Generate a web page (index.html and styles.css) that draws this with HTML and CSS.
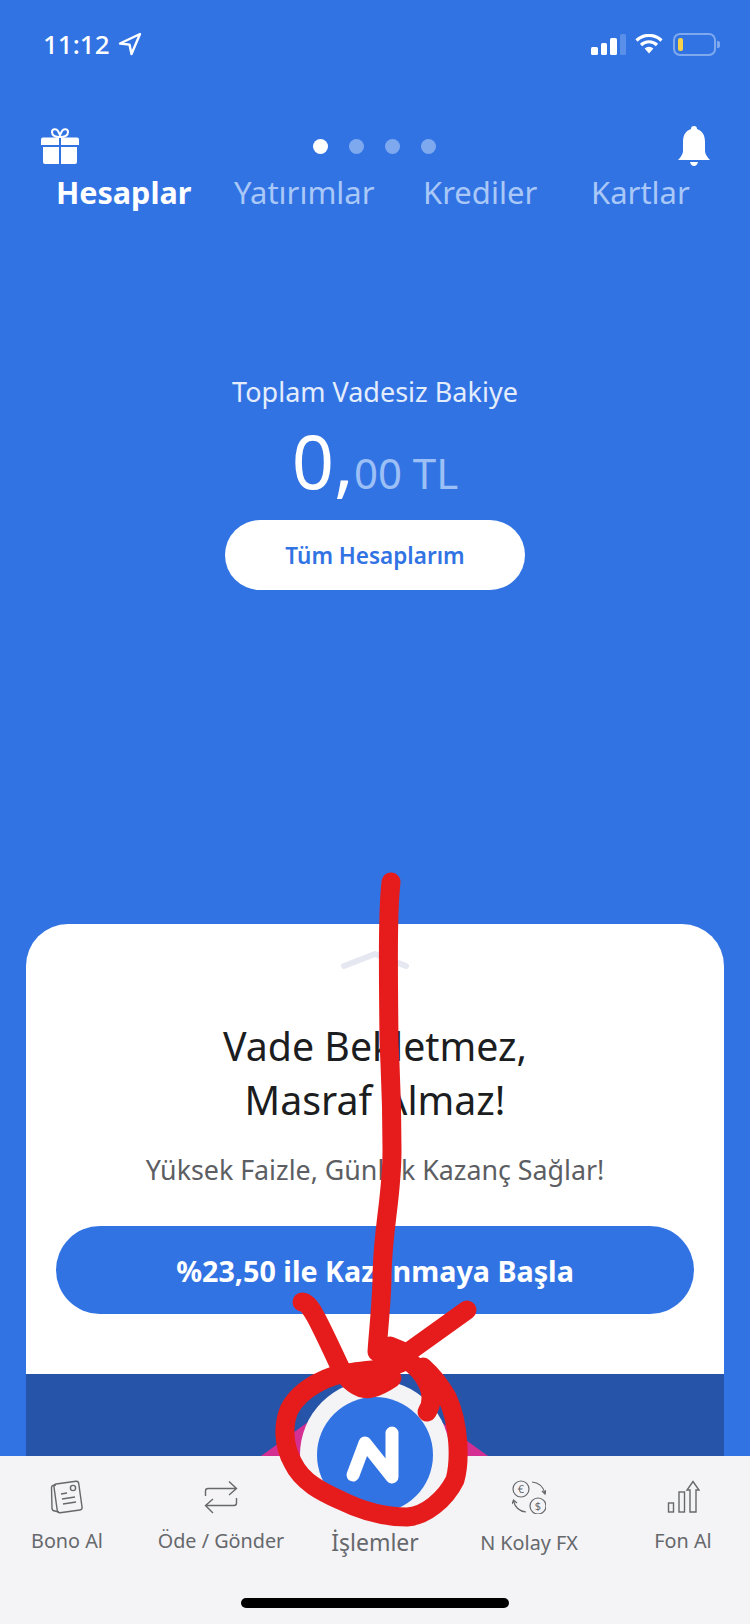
FILE: index.html
```html
<!DOCTYPE html>
<html lang="en">
<head>
    <meta charset="UTF-8">
    <meta name="viewport" content="width=device-width, initial-scale=1.0">
    <title>Hesaplar</title>
    <link rel="stylesheet" href="styles.css">
</head>
<body>
    <div class="screen">
        <div class="statusBar">
            <div class="clock">
                <span>11:12</span>
                <svg class="locationIcon" viewBox="0 0 24 24"><path d="M22 2 L2 11.5 L11.5 12.6 L13.5 22 Z" fill="none" stroke="#fff" stroke-width="2.4" stroke-linejoin="round"/></svg>
            </div>
            <div class="statusIcons">
                <div class="signal">
                    <span class="bar1"></span><span class="bar2"></span><span class="bar3"></span><span class="bar4"></span>
                </div>
                <svg class="wifiIcon" viewBox="0 0 28 20">
                    <path d="M1.5 6.5 A18 18 0 0 1 26.5 6.5 M6 11 A11.5 11.5 0 0 1 22 11" fill="none" stroke="#fff" stroke-width="3.2"/>
                    <path d="M9.6 14.4 A6.4 6.4 0 0 1 18.4 14.4 L14 19.5 Z" fill="#fff"/>
                </svg>
                <div class="battery"><span class="charge"></span></div>
            </div>
        </div>

        <div class="topRow">
            <svg class="giftIcon" viewBox="0 0 40 36">
                <path d="M20 9 C15 9 12 7 12 4 C12 1 16 0 18 3 L20 7 L22 3 C24 0 28 1 28 4 C28 7 25 9 20 9 Z" fill="none" stroke="#fff" stroke-width="2"/>
                <path d="M1 11.5 Q1 9.5 3 9.5 H19 V17 H1 Z M21 9.5 H37 Q39 9.5 39 11.5 V17 H21 Z M3 19 H19 V36 H5 Q3 36 3 34 Z M21 19 H37 V34 Q37 36 35 36 H21 Z" fill="#fff"/>
            </svg>
            <div class="dots">
                <span class="dot active"></span><span class="dot"></span><span class="dot"></span><span class="dot"></span>
            </div>
            <svg class="bellIcon" viewBox="0 0 32 40">
                <path d="M16 0 Q19 0 19 3 C25 5 27 10 27 16 V25 Q27 29 32 34 H0 Q5 29 5 25 V16 C5 10 7 5 13 3 Q13 0 16 0 Z" fill="#fff"/>
                <path d="M12 36 H20 Q19 40 16 40 Q13 40 12 36 Z" fill="#fff"/>
            </svg>
        </div>
        <div class="tabs">
            <span class="tab current">Hesaplar</span>
            <span class="tab">Yatırımlar</span>
            <span class="tab">Krediler</span>
            <span class="tab">Kartlar</span>
        </div>

        <div class="balance">
            <div class="balanceLabel">Toplam Vadesiz Bakiye</div>
            <div class="amount"><span class="whole">0,</span><span class="cents">00 TL</span></div>
            <button class="whiteBtn">Tüm Hesaplarım</button>
        </div>

        <div class="card">
            <svg class="handle" viewBox="0 0 70 20"><path d="M4 16 L35 4 L66 16" fill="none" stroke="#e6e8f1" stroke-width="6" stroke-linecap="round" stroke-linejoin="round"/></svg>
            <h1 class="cardTitle">Vade Bekletmez,<br>Masraf Almaz!</h1>
            <p class="cardText">Yüksek Faizle, Günlük Kazanç Sağlar!</p>
            <button class="blueBtn">%23,50 ile Kazanmaya Başla</button>
            <div class="banner"><div class="pinkShape"></div></div>
        </div>

        <div class="tabBar">
            <div class="navItem">
                <svg class="navIcon" viewBox="0 0 34 34" fill="none" stroke="#66686c" stroke-width="1.4">
                    <path d="M6 5 L3 5.5 Q1.5 6 1.5 7.5 L2 28 Q2 31 5 31 L9 32"/>
                    <rect x="5.5" y="2.5" width="25" height="29" rx="2.5" transform="rotate(-8 18 17)"/>
                    <circle cx="23" cy="8" r="2.6"/>
                    <path d="M11 14 L17 13 M12 19 L25 17 M13 24 L26 22"/>
                </svg>
                <span class="navLabel">Bono Al</span>
            </div>
            <div class="navItem">
                <svg class="navIcon" viewBox="0 0 34 34" fill="none" stroke="#66686c" stroke-width="1.4">
                    <path d="M1.5 16 V11 Q1.5 8.5 4 8.5 H32 M25 1.5 L32.5 8.5 L25 15"/>
                    <path d="M32.5 18 V23 Q32.5 25.5 30 25.5 H2 M9 19 L1.5 25.5 L9 33"/>
                </svg>
                <span class="navLabel">Öde / Gönder</span>
            </div>
            <div class="navItem center">
                <span class="navLabel">İşlemler</span>
            </div>
            <div class="navItem">
                <svg class="navIcon" viewBox="0 0 34 34" fill="none" stroke="#66686c" stroke-width="1.2">
                    <circle cx="9" cy="9" r="8"/>
                    <circle cx="26" cy="26" r="8"/>
                    <text class="moneyText" x="9" y="13">€</text>
                    <text class="moneyText" x="26" y="30">$</text>
                    <path d="M20 2 Q30 3 33 13 M30 11 L33 14 L34 10 M14 32 Q4 31 1.5 21 M0 24 L1.5 20 L5 23"/>
                </svg>
                <span class="navLabel lower">N Kolay FX</span>
            </div>
            <div class="navItem">
                <svg class="navIcon" viewBox="0 0 34 34" fill="none" stroke="#66686c" stroke-width="1.4">
                    <rect x="2.5" y="23" width="5" height="9"/>
                    <rect x="13" y="12" width="5.5" height="20"/>
                    <path d="M24 32 V10 H21 L27 1.5 L33 10 H30 V32 Z"/>
                </svg>
                <span class="navLabel">Fon Al</span>
            </div>
            <div class="homeBar"></div>
        </div>

        <div class="fabRing">
            <div class="fab">
                <svg class="fabMark" viewBox="0 0 116 116"><path d="M36 78 L48 46 L75 80 V36" fill="none" stroke="#fff" stroke-width="13" stroke-linecap="round" stroke-linejoin="round"/></svg>
            </div>
        </div>

        <!-- red marker drawn on top of the screenshot -->
        <svg class="scribble" viewBox="0 0 750 1624">
            <path d="M391 882 C388 910 388 950 389 1040 C390 1070 392 1090 392 1150 C392 1200 382 1230 382 1280 C381 1310 378 1335 377 1352 L390 1352"/>
            <path d="M302 1302 C310 1302 318 1320 340 1367 C346 1380 360 1392 372 1388 C380 1386 386 1382 392 1378"/>
            <path d="M467 1310 L407 1353 L390 1346"/>
            <path d="M350 1373 C330 1374 300 1388 289 1410 C283 1425 283 1445 293 1463 C302 1482 322 1492 340 1500 C360 1510 385 1517 407 1517 C425 1516 445 1500 455 1480 C460 1462 460 1425 447 1397 C440 1385 432 1375 423 1367"/>
            <path d="M350 1373 C365 1369 385 1372 407 1360 C425 1372 438 1395 427 1412"/>
        </svg>
    </div>
</body>
</html>
```

FILE: styles.css
```css
* {
    box-sizing: border-box;
}
body {
    margin: 0;
    background-color: #3273e4;
    font-family: 'Noto Sans', sans-serif;
}
.screen {
    position: relative;
    width: 750px;
    height: 1624px;
    overflow: hidden;
    display: flex;
    flex-direction: column;
    background-color: #3273e4;
}

/* status bar */
.statusBar {
    height: 130px;
    padding: 26px 34px 0 43px;
    display: flex;
    justify-content: space-between;
    align-items: flex-start;
}
.clock {
    display: flex;
    align-items: center;
    gap: 8px;
    color: #fff;
    font-size: 26px;
    font-weight: 500;
    line-height: 36px;
}
.locationIcon {
    width: 24px;
    height: 24px;
}
.statusIcons {
    display: flex;
    align-items: center;
    gap: 9px;
    height: 36px;
}
.signal {
    display: flex;
    align-items: flex-end;
    gap: 3px;
    height: 22px;
}
.signal span {
    width: 6.5px;
    background: #fff;
    border-radius: 1.5px;
}
.bar1 { height: 8px; }
.bar2 { height: 12px; }
.bar3 { height: 17px; }
.signal .bar4 {
    height: 21px;
    background: #5b90ea;
}
.wifiIcon {
    width: 28px;
    height: 20px;
}
.battery {
    position: relative;
    width: 43px;
    height: 23px;
    margin-left: 1px;
    padding: 3px;
    border: 2px solid #7fa9ee;
    border-radius: 7px;
}
.battery::after {
    content: "";
    position: absolute;
    right: -6px;
    top: 6px;
    width: 3px;
    height: 7px;
    background: #7fa9ee;
    border-radius: 0 2px 2px 0;
}
.charge {
    display: block;
    width: 5px;
    height: 100%;
    background: #f5d24a;
    border-radius: 2px;
}

/* header */
.topRow {
    height: 40px;
    margin-top: -4px;
    padding: 0 40px;
    display: flex;
    justify-content: space-between;
    align-items: center;
}
.giftIcon {
    width: 40px;
    height: 36px;
}
.bellIcon {
    width: 32px;
    height: 40px;
}
.dots {
    display: flex;
    gap: 21px;
    margin-left: -10px;
}
.dot {
    width: 15px;
    height: 15px;
    border-radius: 50%;
    background: #7fa9ee;
}
.dot.active {
    background: #fff;
}
.tabs {
    padding-left: 56px;
    display: grid;
    grid-template-columns: 178px 189px 168px auto;
    line-height: 40px;
    margin-top: 6px;
}
.tab {
    font-size: 31px;
    color: #a9c8f7;
}
.tab.current {
    color: #fff;
    font-weight: 700;
    font-size: 30.5px;
}

/* balance */
.balance {
    margin-top: 162px;
    display: flex;
    flex-direction: column;
    align-items: center;
}
.balanceLabel {
    color: #e3edfc;
    font-size: 27px;
    line-height: 36px;
}
.amount {
    margin-top: 5px;
    height: 92px;
    line-height: 92px;
    color: #fff;
}
.whole {
    font-size: 74px;
}
.cents {
    margin-left: 0;
    font-size: 42px;
    color: #9cc0f5;
}
.whiteBtn {
    width: 300px;
    height: 70px;
    margin-top: 13px;
    border: none;
    border-radius: 35px;
    background: #fff;
    color: #3273e4;
    font-family: inherit;
    font-size: 22.5px;
    font-weight: 600;
}

/* card */
.card {
    flex: 1;
    margin: 334px 26px 0;
    padding-top: 26px;
    background: #fff;
    border-radius: 42px 42px 0 0;
    display: flex;
    flex-direction: column;
    align-items: center;
}
.handle {
    width: 70px;
    height: 20px;
}
.cardTitle {
    margin: 49px 0 0;
    color: #1b1d20;
    font-size: 39.3px;
    font-weight: 400;
    line-height: 54px;
    text-align: center;
}
.cardText {
    margin: 25px 0 0;
    color: #5c5e63;
    font-size: 26.8px;
    line-height: 36px;
}
.blueBtn {
    width: 638px;
    height: 88px;
    margin-top: 38px;
    border: none;
    border-radius: 44px;
    background: #3273e4;
    color: #fff;
    font-family: inherit;
    font-size: 28.7px;
    font-weight: 700;
}
.banner {
    position: relative;
    flex: 1;
    width: 100%;
    margin-top: 60px;
    overflow: hidden;
    background: #2654a8;
}
.pinkShape {
    position: absolute;
    left: 235px;
    bottom: 0;
    width: 227px;
    height: 82px;
    background: #d42f93;
    clip-path: polygon(0 100%, 50% 0, 100% 100%);
}

/* bottom bar */
.tabBar {
    position: relative;
    height: 168px;
    flex-shrink: 0;
    display: flex;
    justify-content: center;
    background: #f4f4f6;
    padding-top: 24px;
}
.navItem {
    width: 154px;
    flex-shrink: 0;
    display: flex;
    flex-direction: column;
    align-items: center;
}
.navIcon {
    width: 34px;
    height: 34px;
}
.navLabel {
    margin-top: 12px;
    color: #66686c;
    font-size: 19.8px;
    line-height: 30px;
    white-space: nowrap;
}
.navLabel.lower {
    margin-top: 14px;
}
.navItem.center .navLabel {
    margin-top: 47px;
    font-size: 23px;
}
.moneyText {
    fill: #66686c;
    stroke: none;
    font-family: 'Noto Sans', sans-serif;
    font-size: 11px;
    text-anchor: middle;
}
.homeBar {
    position: absolute;
    left: 241px;
    bottom: 16px;
    width: 268px;
    height: 10px;
    border-radius: 5px;
    background: #000;
}

/* floating button, sits over the card and the bar */
.fabRing {
    position: absolute;
    left: 300px;
    top: 1380px;
    width: 150px;
    height: 150px;
    padding: 17px;
    border-radius: 50%;
    background: #f4f4f6;
}
.fab {
    width: 116px;
    height: 116px;
    border-radius: 50%;
    background: #3273e4;
}
.fabMark {
    display: block;
    width: 116px;
    height: 116px;
}
.scribble {
    position: absolute;
    left: 0;
    top: 0;
    width: 750px;
    height: 1624px;
    fill: none;
    stroke: #e61c1c;
    stroke-width: 19;
    stroke-linecap: round;
    stroke-linejoin: round;
    pointer-events: none;
}
```
